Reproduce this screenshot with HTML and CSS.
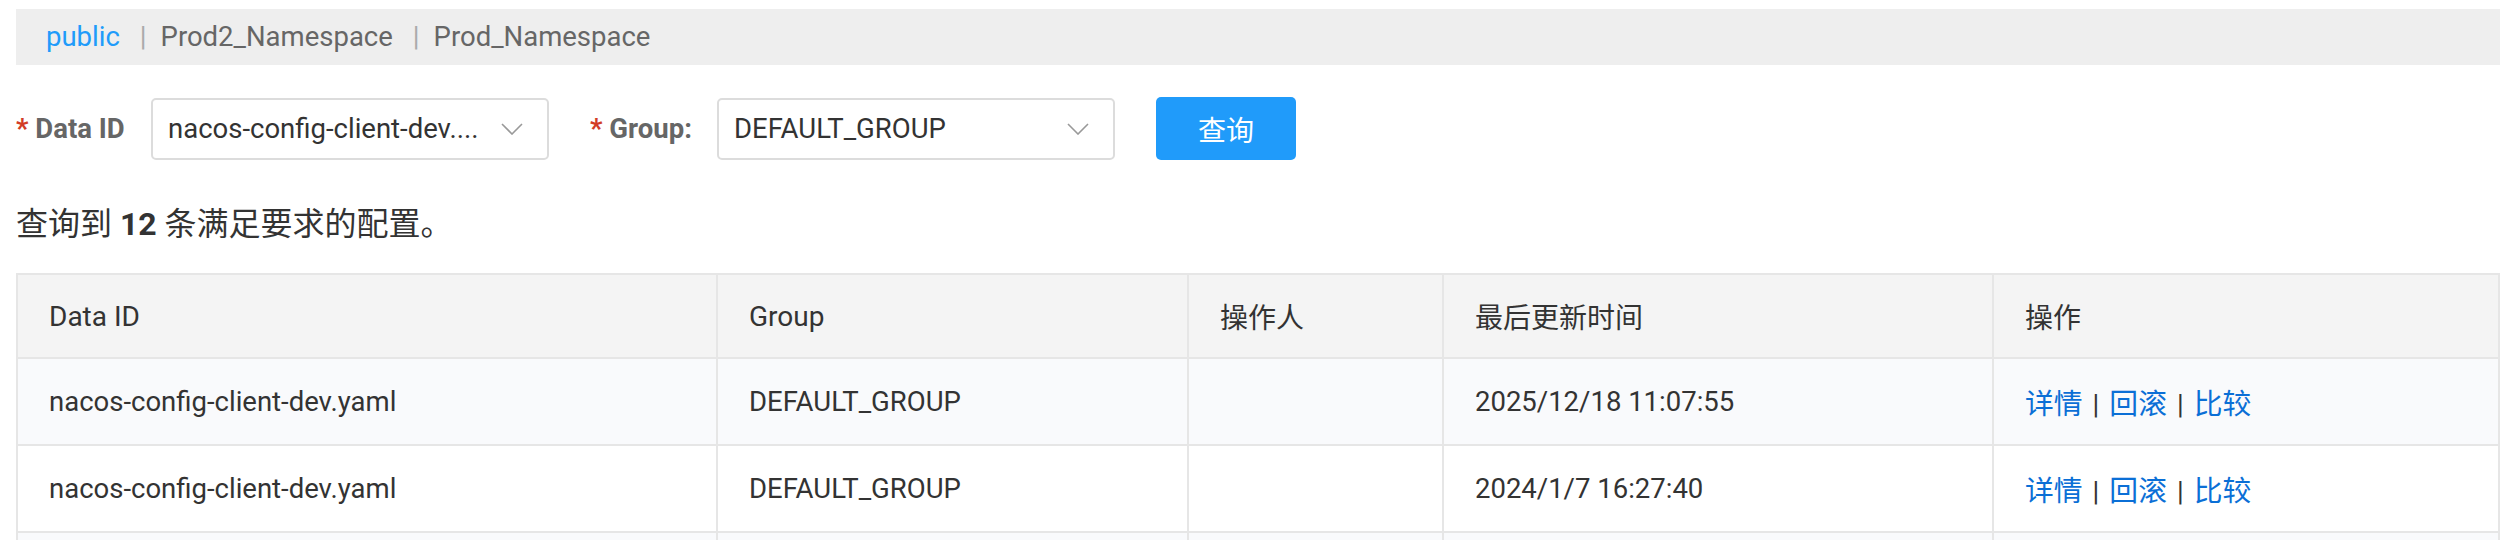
FILE: index.html
```html
<!DOCTYPE html>
<html lang="zh-CN">
<head>
<meta charset="utf-8">
<title>历史版本</title>
<link rel="stylesheet" href="styles.css">
</head>
<body>
<div class="page">
  <div class="ns-bar">
    <span class="ns ns-active">public</span><span class="ns-sep">|</span><span class="ns">Prod2_Namespace</span><span class="ns-sep">|</span><span class="ns">Prod_Namespace</span>
  </div>

  <div class="query-form">
    <div class="form-item">
      <label class="form-label label-dataid"><span class="req">*</span> Data ID</label>
      <div class="select">
        <span class="select-value">nacos-config-client-dev....</span>
        <svg class="chevron" width="22" height="12" viewBox="0 0 22 12"><polyline points="1,1 11,11 21,1" fill="none" stroke="#999" stroke-width="1.6"/></svg>
      </div>
    </div>
    <div class="form-item">
      <label class="form-label label-group"><span class="req">*</span> Group:</label>
      <div class="select">
        <span class="select-value">DEFAULT_GROUP</span>
        <svg class="chevron" width="22" height="12" viewBox="0 0 22 12"><polyline points="1,1 11,11 21,1" fill="none" stroke="#999" stroke-width="1.6"/></svg>
      </div>
    </div>
    <button class="btn-primary" type="button">查询</button>
  </div>

  <div class="result-tip">查询到 <strong>12</strong> 条满足要求的配置。</div>

  <table class="config-table">
    <thead>
      <tr>
        <th class="col-id">Data ID</th>
        <th class="col-group">Group</th>
        <th class="col-user">操作人</th>
        <th class="col-time">最后更新时间</th>
        <th class="col-ops">操作</th>
      </tr>
    </thead>
    <tbody>
      <tr class="row-alt">
        <td>nacos-config-client-dev.yaml</td>
        <td>DEFAULT_GROUP</td>
        <td></td>
        <td>2025/12/18 11:07:55</td>
        <td><a class="op-link">详情</a><span class="op-sep">|</span><a class="op-link">回滚</a><span class="op-sep">|</span><a class="op-link">比较</a></td>
      </tr>
      <tr>
        <td>nacos-config-client-dev.yaml</td>
        <td>DEFAULT_GROUP</td>
        <td></td>
        <td>2024/1/7 16:27:40</td>
        <td><a class="op-link">详情</a><span class="op-sep">|</span><a class="op-link">回滚</a><span class="op-sep">|</span><a class="op-link">比较</a></td>
      </tr>
      <tr class="row-alt">
        <td></td>
        <td></td>
        <td></td>
        <td></td>
        <td></td>
      </tr>
    </tbody>
  </table>
</div>
</body>
</html>
```

FILE: styles.css
```css
html, body {
  margin: 0;
  padding: 0;
  background: #fff;
}

body {
  font-family: Roboto, "Noto Sans CJK SC", sans-serif;
  font-size: 27.5px;
  color: #333;
}

.page {
  padding: 9px 9px 0 16px;
}

/* namespace bar */
.ns-bar {
  height: 56px;
  background: #eeeeee;
  display: flex;
  align-items: center;
  padding-left: 30px;
}

.ns {
  color: #666;
  line-height: 1;
}

.ns-active {
  color: #209bfa;
}

.ns-sep {
  color: #aaa;
  margin: 0 14px 0 20px;
  line-height: 1;
}

/* query form */
.query-form {
  display: flex;
  align-items: center;
  gap: 41px;
  margin-top: 32px;
  height: 63px;
}

.form-item {
  display: flex;
  align-items: center;
}

.form-label {
  font-weight: 700;
  color: #666;
  white-space: nowrap;
}

.label-dataid {
  width: 135px;
}

.label-group {
  width: 127px;
}

.req {
  color: #d23c26;
}

.select {
  box-sizing: border-box;
  width: 398px;
  height: 62px;
  border: 2px solid #dcdcdc;
  border-radius: 5px;
  display: flex;
  align-items: center;
  padding-left: 15px;
  padding-right: 24px;
  background: #fff;
}

.select-value {
  flex: 1;
  color: #333;
  white-space: nowrap;
  overflow: hidden;
}

.chevron {
  flex: none;
  display: block;
}

.btn-primary {
  width: 140px;
  height: 63px;
  border: none;
  border-radius: 5px;
  background: #209bfa;
  color: #fff;
  font-family: Roboto, "Noto Sans CJK SC", sans-serif;
  font-size: 28px;
  padding: 0;
}

/* result tip */
.result-tip {
  font-size: 32px;
  line-height: 44px;
  margin: 42px 0 27px;
  color: #333;
}

.result-tip strong {
  font-weight: 700;
}

/* table */
.config-table {
  width: 2484px;
  table-layout: fixed;
  border-collapse: separate;
  border-spacing: 0;
  border-top: 2px solid #e6e6e6;
  border-left: 2px solid #e6e6e6;
}

.config-table th,
.config-table td {
  box-sizing: border-box;
  border-right: 2px solid #e6e6e6;
  border-bottom: 2px solid #e6e6e6;
  padding: 0 31px;
  text-align: left;
  vertical-align: middle;
  white-space: nowrap;
  color: #333;
}

.config-table th {
  height: 84px;
  font-size: 28px;
  font-weight: 400;
  background: #f4f4f4;
}

.config-table td {
  height: 87px;
  background: #fff;
}

.config-table .row-alt td {
  background: #f9fafc;
}

.col-id { width: 700px; }
.col-group { width: 471px; }
.col-user { width: 255px; }
.col-time { width: 550px; }
.col-ops { width: 506px; }

.op-link {
  color: #0b6fd6;
  font-size: 28.8px;
  cursor: pointer;
}

.op-sep {
  color: #333;
  margin: 0 10px;
}
```
